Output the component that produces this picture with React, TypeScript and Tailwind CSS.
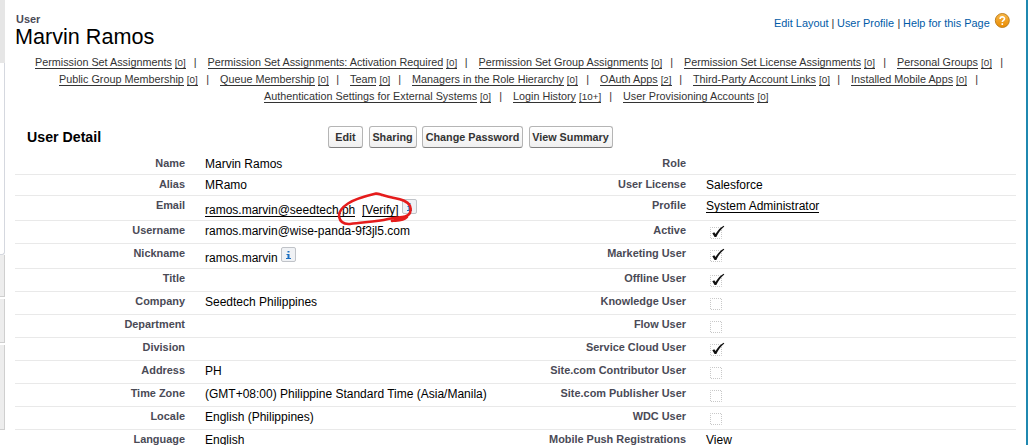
import React from "react";

type NavItem = { label: string; count: string; width: string; last?: boolean };

const navRows: { pad: string; items: NavItem[] }[] = [
  {
    pad: "pl-[35px]",
    items: [
      { label: "Permission Set Assignments", count: "0", width: "w-[172.5px]" },
      { label: "Permission Set Assignments: Activation Required", count: "0", width: "w-[271px]" },
      { label: "Permission Set Group Assignments", count: "0", width: "w-[205.5px]" },
      { label: "Permission Set License Assignments", count: "0", width: "w-[213px]" },
      { label: "Personal Groups", count: "0", width: "w-[117px]" },
    ],
  },
  {
    pad: "pl-[59px]",
    items: [
      { label: "Public Group Membership", count: "0", width: "w-[161px]" },
      { label: "Queue Membership", count: "0", width: "w-[130px]" },
      { label: "Team", count: "0", width: "w-[62px]" },
      { label: "Managers in the Role Hierarchy", count: "0", width: "w-[188px]" },
      { label: "OAuth Apps", count: "2", width: "w-[93px]" },
      { label: "Third-Party Account Links", count: "0", width: "w-[158px]" },
      { label: "Installed Mobile Apps", count: "0", width: "w-[138px]" },
    ],
  },
  {
    pad: "pl-[264px]",
    items: [
      { label: "Authentication Settings for External Systems", count: "0", width: "w-[249px]" },
      { label: "Login History", count: "10+", width: "w-[110px]" },
      { label: "User Provisioning Accounts", count: "0", width: "w-[158px]", last: true },
    ],
  },
];

function NavLink({ item }: { item: NavItem }) {
  return (
    <span className={`flex shrink-0 items-baseline whitespace-nowrap ${item.width}`}>
      <a className="border-b border-[#333] leading-[11px]">{item.label}</a>
      <a className="ml-[3px] border-b border-[#333] text-[9.8px] leading-[11px]">[{item.count}]</a>
      {!item.last && <span className="mr-[11px] ml-auto leading-[11px]">|</span>}
    </span>
  );
}

function InfoIcon() {
  return (
    <span className="flex h-[15px] w-[15px] items-center justify-center rounded-[2px] border border-[#c0c3c8] bg-[#f0f2f5]">
      <svg width="5" height="8" viewBox="0 0 5 8" fill="#1b6fc2">
        <path d="M1.5 0h2v1.5h-2zM.5 3h3v4H5v1H0V7h1.5V4h-1z" />
      </svg>
    </span>
  );
}

function Check({ on }: { on?: boolean }) {
  return (
    <svg className="ml-[4px]" width="16" height="15" viewBox="0 0 16 15" fill="none">
      <rect x=".5" y="2.5" width="11" height="11" stroke="#c8c8c8" strokeDasharray="1 1" strokeDashoffset=".5" />
      {on && (
        <path d="M2.3 8.2 4.3 7.2 5.5 9.1C7.8 5.2 10.5 2.2 13.7.7L14.3 1.4C10.8 4.1 8.4 7.5 6.3 12H4.6Z" fill="#111" />
      )}
    </svg>
  );
}

function AnnotatedEmail() {
  return (
    <span className="relative flex items-start">
      <a className="mt-[4px] w-[150px] border-b border-black leading-[12px]">ramos.marvin@seedtech.ph</a>
      <a className="mt-[4px] ml-[7px] w-[37px] border-b border-black leading-[12px]">[Verify]</a>
      <span className="-mt-px ml-[3px]"><InfoIcon /></span>
      <svg className="absolute -top-[9px] left-[131px]" width="80" height="37" viewBox="0 0 80 37" fill="none" stroke="#e51c1c" strokeWidth="2.6" strokeLinecap="round" strokeLinejoin="round">
        <path d="M46 4C44 3 42 2.4 40 2.6 30 5 20 7.5 12 12.5 5 17 2.5 21 3 25.5 4 30.5 8 33.5 14 33 28 31 40 31 52 28 58 26.5 64 26.5 69 25.5 74 24.5 76 19.5 74 15 71 9 63 8 56 6.5 50 5.5 45 3 41 2.8" />
        <path d="M56 29.5C62 30 68 29.5 71 26 M56 30 68 26.5" />
      </svg>
    </span>
  );
}

type Row = { height: string; left: string; value?: React.ReactNode; right: string; rvalue?: React.ReactNode };

const rows: Row[] = [
  { height: "h-[21px]", left: "Name", value: "Marvin Ramos", right: "Role" },
  { height: "h-[21px]", left: "Alias", value: "MRamo", right: "User License", rvalue: "Salesforce" },
  { height: "h-[25px]", left: "Email", value: <AnnotatedEmail />, right: "Profile", rvalue: <a className="block w-[113px] border-b border-black leading-[12px]">System Administrator</a> },
  { height: "h-[23px]", left: "Username", value: "ramos.marvin@wise-panda-9f3jl5.com", right: "Active", rvalue: <Check on /> },
  { height: "h-[25px]", left: "Nickname", value: <span className="flex"><span className="mt-[4px] w-[73px] leading-[12px]">ramos.marvin</span><span className="-mt-px ml-[3px]"><InfoIcon /></span></span>, right: "Marketing User", rvalue: <Check on /> },
  { height: "h-[23px]", left: "Title", right: "Offline User", rvalue: <Check on /> },
  { height: "h-[23px]", left: "Company", value: "Seedtech Philippines", right: "Knowledge User", rvalue: <Check /> },
  { height: "h-[23px]", left: "Department", right: "Flow User", rvalue: <Check /> },
  { height: "h-[23px]", left: "Division", right: "Service Cloud User", rvalue: <Check on /> },
  { height: "h-[23px]", left: "Address", value: "PH", right: "Site.com Contributor User", rvalue: <Check /> },
  { height: "h-[23px]", left: "Time Zone", value: "(GMT+08:00) Philippine Standard Time (Asia/Manila)", right: "Site.com Publisher User", rvalue: <Check /> },
  { height: "h-[23px]", left: "Locale", value: "English (Philippines)", right: "WDC User", rvalue: <Check /> },
  { height: "h-[23px]", left: "Language", value: "English", right: "Mobile Push Registrations", rvalue: "View" },
];

function Label({ children }: { children: string }) {
  return <div className="text-right text-[10.92px] leading-[12px] font-bold text-[#4a4a56]">{children}</div>;
}

function DetailRow({ row }: { row: Row }) {
  return (
    <div className={`grid shrink-0 grid-cols-[170px_20px_311px_170px_20px_1fr] border-b border-[#e9e9e9] pt-[3px] whitespace-nowrap ${row.height}`}>
      <Label>{row.left}</Label>
      <span />
      <div className="pt-px leading-[12px]">{row.value}</div>
      <Label>{row.right}</Label>
      <span />
      <div className="pt-px leading-[12px]">{row.rvalue}</div>
    </div>
  );
}

const buttons = [
  { label: "Edit", width: "w-[35px]" },
  { label: "Sharing", width: "w-[48px]" },
  { label: "Change Password", width: "w-[101px]" },
  { label: "View Summary", width: "w-[84px]" },
];

export default function App() {
  return (
    <div className="flex h-[445px] w-[1028px] overflow-hidden bg-white font-['Liberation_Sans',Arial,sans-serif] text-[12px] text-black">
      <aside className="flex w-[5px] shrink-0 flex-col">
        <div className="h-[63px] bg-[#e6e6e6]" />
        <div className="h-[192px] rounded-br-[3px] border-r border-b border-[#d5d8df] bg-white" />
        <div className="h-[42px] border-r border-b border-[#cfcfcf] bg-[#ededed]" />
        <div className="mt-[2px] h-[44px] border-r border-b border-[#cfcfcf] bg-[#ededed]" />
        <div className="mt-[2px] h-[85px] border-r border-b border-[#cfcfcf] bg-[#ededed]" />
      </aside>
      <main className="flex w-[1021px] shrink-0 flex-col">
        <header className="flex h-[54px] shrink-0 justify-between pl-[10px]">
          <div className="pt-[13px]">
            <div className="ml-[1px] text-[10.92px] leading-[12px] font-bold text-[#4a4a56]">User</div>
            <h1 className="text-[21.6px] leading-[24px]">Marvin Ramos</h1>
          </div>
          <div className="flex pt-[13px] pr-[16px] text-[10.92px] whitespace-nowrap text-[#015ba7]">
            <a className="w-[55px] pt-[4px] leading-[12px]">Edit Layout</a>
            <span className="w-[8px] pt-[4px] text-center leading-[12px] text-[#333]">|</span>
            <a className="w-[58px] pt-[4px] leading-[12px]">User Profile</a>
            <span className="w-[8px] pt-[4px] text-center leading-[12px] text-[#333]">|</span>
            <a className="w-[91px] pt-[4px] leading-[12px]">Help for this Page</a>
            <svg width="16" height="16" viewBox="0 0 16 16">
              <defs>
                <linearGradient id="helpFill" x1="0" y1="0" x2="0" y2="1">
                  <stop offset="0" stopColor="#f8b94a" />
                  <stop offset="1" stopColor="#e98a00" />
                </linearGradient>
              </defs>
              <circle cx="8.3" cy="7.5" r="7" fill="url(#helpFill)" stroke="#b87818" strokeWidth=".9" />
              <path d="M6.1 6C6.1 3.2 10.5 3.2 10.5 5.7 10.5 7.3 8.3 7.3 8.3 9M8.3 10.3V12" stroke="#fff" strokeWidth="1.6" fill="none" />
            </svg>
          </div>
        </header>
        <nav className="-ml-[5px] flex h-[71px] shrink-0 flex-col text-[10.8px] text-[#333]">
          {navRows.map((r) => (
            <div key={r.pad} className={`flex h-[17px] items-center ${r.pad}`}>
              {r.items.map((item) => <NavLink key={item.label} item={item} />)}
            </div>
          ))}
        </nav>
        <section className="flex flex-col">
          <div className="flex h-[29px] shrink-0 items-start pl-[22px]">
            <h2 className="w-[301px] pt-[5px] text-[14.2px] leading-[15px] font-bold">User Detail</h2>
            <div className="flex gap-[5.5px] pt-px">
              {buttons.map((b) => (
                <button key={b.label} className={`h-[22px] rounded-[3px] border border-[#b5b5b5] border-b-[#7f7f7f] bg-linear-to-b from-white to-[#f0f0f0] text-[10.8px] leading-[18px] font-bold whitespace-nowrap text-[#333] ${b.width}`}>
                  {b.label}
                </button>
              ))}
            </div>
          </div>
          <div className="mr-[10px] ml-[10px] flex flex-col">
            {rows.map((row) => <DetailRow key={row.left} row={row} />)}
          </div>
        </section>
      </main>
      <div className="w-[2px] shrink-0 bg-[#1f88b0]" />
    </div>
  );
}
